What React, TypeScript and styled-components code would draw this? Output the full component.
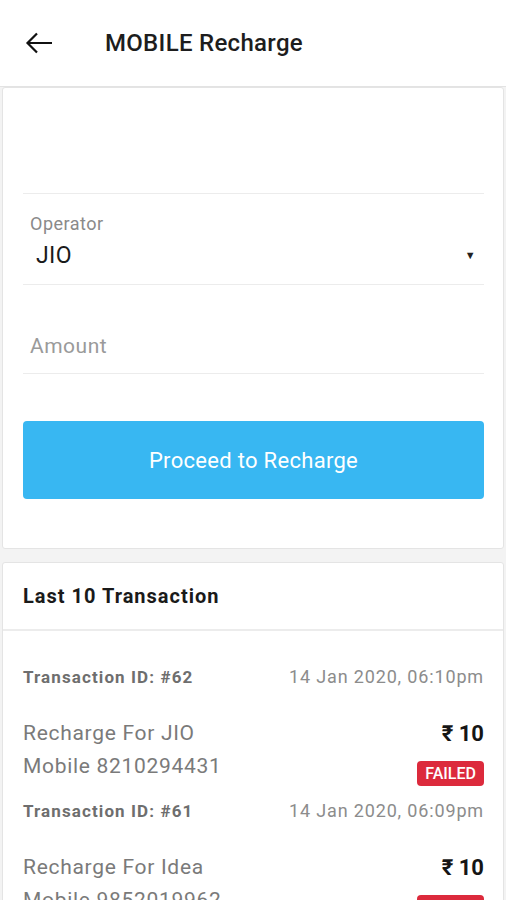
import React from 'react'
import styled, { createGlobalStyle } from 'styled-components'

const GlobalStyle = createGlobalStyle`
  body {
    margin: 0;
    background: #f3f3f3;
    font-family: Roboto, "Liberation Sans", Arial, sans-serif;
  }
`

const Screen = styled.div`
  width: 506px;
  min-height: 900px;
  background: #f3f3f3;
`

const AppBar = styled.header`
  height: 87px;
  display: flex;
  align-items: center;
  padding-left: 25px;
  gap: 52px;
  background: #fff;
  border-bottom: 1px solid #e3e3e3;
  box-sizing: border-box;
`

const BackButton = styled.button`
  border: 0;
  background: none;
  padding: 0;
  width: 28px;
  height: 22px;
  display: flex;
  color: #111;
`

const Title = styled.h1`
  margin: 0;
  font-size: 24px;
  font-weight: 500;
  color: #1d1d1d;
  letter-spacing: 0.3px;
`

const Card = styled.section<{ $gap?: number }>`
  margin: ${({ $gap }) => $gap ?? 0}px 2px 0;
  background: #fff;
  border: 1px solid #e4e4e4;
  border-radius: 3px;
`

const FormBody = styled.div`
  padding: 0 19px 49px 20px;
  display: flex;
  flex-direction: column;
`

const Field = styled.div<{ $height: number; $pad: number }>`
  height: ${({ $height }) => $height}px;
  padding: 0 8px ${({ $pad }) => $pad}px 7px;
  box-sizing: border-box;
  border-bottom: 1px solid #ececec;
  display: flex;
  flex-direction: column;
  justify-content: flex-end;
`

const FieldLabel = styled.div`
  font-size: 18px;
  line-height: 20px;
  letter-spacing: 0.5px;
  color: #8a8a8a;
  margin-bottom: 9px;
`

const SelectRow = styled.div`
  display: flex;
  align-items: center;
  justify-content: space-between;
  padding-left: 6px;
  font-size: 23px;
  line-height: 25px;
  letter-spacing: 0.4px;
  color: #1a1a1a;
`

const Caret = styled.span`
  font-size: 11px;
  color: #222;
`

const Placeholder = styled.div`
  font-size: 21px;
  line-height: 25px;
  letter-spacing: 0.5px;
  color: #9a9a9a;
`

const PrimaryButton = styled.button`
  margin-top: 47px;
  height: 78px;
  border: 0;
  border-radius: 4px;
  background: #38b7f2;
  color: #fff;
  font-family: inherit;
  font-size: 22px;
  font-weight: 400;
  letter-spacing: 0.3px;
`

const CardHeader = styled.div`
  height: 66px;
  display: flex;
  align-items: center;
  padding: 0 20px;
  border-bottom: 2px solid #ececec;
  font-size: 20px;
  font-weight: 700;
  letter-spacing: 1px;
  color: #1a1a1a;
`

const TxList = styled.div`
  padding: 34px 19px 0 20px;
`

const TxItem = styled.div`
  padding-bottom: 13px;
`

const TxTop = styled.div`
  display: flex;
  justify-content: space-between;
  align-items: center;
  line-height: 24px;
`

const TxId = styled.span`
  font-size: 17px;
  font-weight: 700;
  letter-spacing: 1.1px;
  color: #6e6e6e;
`

const TxDate = styled.span`
  font-size: 18px;
  letter-spacing: 0.85px;
  color: #8c8c8c;
`

const TxBody = styled.div`
  margin-top: 28px;
  display: flex;
  justify-content: space-between;
`

const TxLines = styled.div`
  font-size: 21px;
  line-height: 33px;
  letter-spacing: 0.7px;
  color: #7a7a7a;
`

const TxSide = styled.div`
  display: flex;
  flex-direction: column;
  align-items: flex-end;
`

const Amount = styled.div`
  font-size: 22px;
  line-height: 33px;
  font-weight: 700;
  color: #151515;
`

const StatusBadge = styled.span<{ $color: string }>`
  margin-top: 11px;
  height: 25px;
  padding: 0 8px;
  border-radius: 4px;
  background: ${({ $color }) => $color};
  color: #fff;
  font-size: 16px;
  line-height: 25px;
  font-weight: 500;
`

const transactions = [
  { id: 62, date: '14 Jan 2020, 06:10pm', operator: 'JIO', mobile: '8210294431', amount: 10, status: 'FAILED' },
  { id: 61, date: '14 Jan 2020, 06:09pm', operator: 'Idea', mobile: '9852019962', amount: 10, status: 'FAILED' }
]

export default function App() {
  return (
    <Screen>
      <GlobalStyle />
      <AppBar>
        <BackButton aria-label="Back">
          <svg width="28" height="22" viewBox="0 0 28 22" fill="none" stroke="currentColor" strokeWidth="2.2">
            <path d="M27 11H2.5M12 1.5L2.5 11l9.5 9.5" />
          </svg>
        </BackButton>
        <Title>MOBILE Recharge</Title>
      </AppBar>

      <Card>
        <FormBody>
          <Field $height={106} $pad={15} />
          <Field $height={91} $pad={16}>
            <FieldLabel>Operator</FieldLabel>
            <SelectRow>
              JIO
              <Caret>▼</Caret>
            </SelectRow>
          </Field>
          <Field $height={89} $pad={14}>
            <Placeholder>Amount</Placeholder>
          </Field>
          <PrimaryButton>Proceed to Recharge</PrimaryButton>
        </FormBody>
      </Card>

      <Card $gap={13}>
        <CardHeader>Last 10 Transaction</CardHeader>
        <TxList>
          {transactions.map(tx => (
            <TxItem key={tx.id}>
              <TxTop>
                <TxId>Transaction ID: #{tx.id}</TxId>
                <TxDate>{tx.date}</TxDate>
              </TxTop>
              <TxBody>
                <TxLines>
                  <div>Recharge For {tx.operator}</div>
                  <div>Mobile {tx.mobile}</div>
                </TxLines>
                <TxSide>
                  <Amount>₹ {tx.amount}</Amount>
                  <StatusBadge $color="#dc2a3c">{tx.status}</StatusBadge>
                </TxSide>
              </TxBody>
            </TxItem>
          ))}
        </TxList>
      </Card>
    </Screen>
  )
}
